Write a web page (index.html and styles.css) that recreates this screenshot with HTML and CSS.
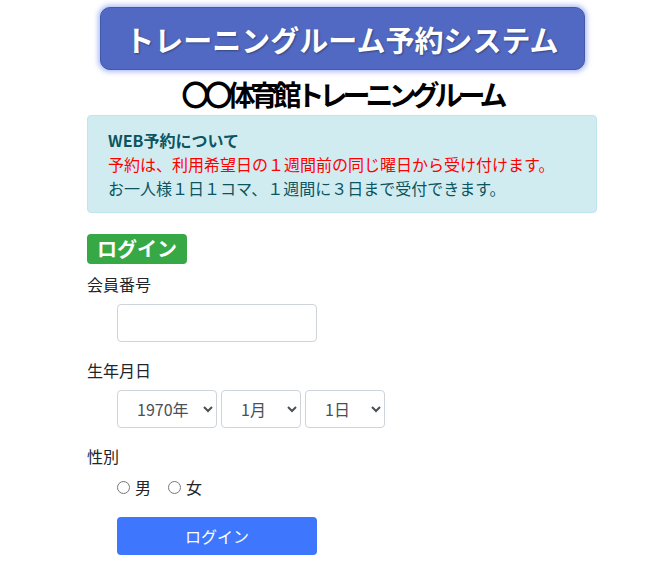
FILE: index.html
```html
<!DOCTYPE html>
<html lang="ja">
<head>
  <meta charset="UTF-8" />
  <title>トレーニングルーム予約システム</title>
  <meta name="viewport" content="width=device-width, initial-scale=1.0" />
  <link rel="stylesheet" href="styles.css">
</head>
<body>
  <div class="container">
    <header class="title-area">
      <div class="banner"><span class="banner-text">トレーニングルーム予約システム</span></div>
      <h1 class="facility">〇〇体育館トレーニングルーム</h1>
    </header>

    <div class="notice">
      <strong>WEB予約について</strong><br />
      <span class="notice-red">予約は、利用希望日の１週間前の同じ曜日から受け付けます。</span><br />
      お一人様１日１コマ、１週間に３日まで受付できます。
    </div>

    <form class="login-form">
      <span class="badge">ログイン</span>

      <div class="form-group">
        <label for="member">会員番号</label>
        <input type="text" id="member" class="field" />
      </div>

      <div class="form-group">
        <label>生年月日</label>
        <div class="birth-row">
          <select class="field year"><option>1970年</option></select>
          <select class="field month"><option>1月</option></select>
          <select class="field day"><option>1日</option></select>
        </div>
      </div>

      <div class="form-group">
        <label>性別</label>
        <div class="gender-row">
          <label class="radio"><input type="radio" name="sex" />男</label>
          <label class="radio"><input type="radio" name="sex" />女</label>
        </div>
      </div>

      <button type="submit">ログイン</button>
    </form>
  </div>
</body>
</html>
```

FILE: styles.css
```css
body {
  margin: 0;
  font-family: "Noto Sans CJK JP", "Noto Sans", sans-serif;
  font-size: 16px;
  line-height: 1.5;
  color: #212529;
  background: #fff;
}
.container {
  width: 510px;
  margin-left: 87px;
}
.banner {
  width: 485px;
  height: 63px;
  box-sizing: border-box;
  margin: 7px auto 0;
  display: flex;
  justify-content: center;
  align-items: center;
  background: #5169c3;
  border: 1px solid #4258a8;
  border-radius: 10px;
  box-shadow: 0 0 5px 2px rgba(110, 135, 235, 0.55);
}
.banner-text {
  white-space: nowrap;
  color: #fff;
  font-size: 29px;
  line-height: 40px;
  font-weight: bold;
  text-shadow: 1px 1px 2px rgba(0, 0, 0, 0.35);
}
.facility {
  margin: 7px 0 4px;
  text-align: center;
  font-size: 28px;
  line-height: 34px;
  font-weight: bold;
  color: #000;
  letter-spacing: -5px;
}
.notice {
  background: #d1ecf1;
  border: 1px solid #bee5eb;
  border-radius: 4px;
  color: #0c5460;
  padding: 12px 20px;
  margin-bottom: 21px;
}
.notice-red {
  color: #ff0000;
}
.badge {
  display: block;
  width: fit-content;
  background: #37a846;
  color: #fff;
  font-size: 20px;
  font-weight: bold;
  line-height: 30px;
  padding: 0 10px;
  border-radius: 4px;
  margin-bottom: 8px;
}
.form-group {
  margin-bottom: 16px;
}
.form-group > label {
  display: block;
  margin-bottom: 8px;
}
.field {
  box-sizing: border-box;
  height: 38px;
  border: 1px solid #ced4da;
  border-radius: 4px;
  background-color: #fff;
  color: #495057;
  font-family: inherit;
  font-size: 16px;
}
input.field {
  display: block;
  width: 200px;
  margin-left: 30px;
  padding: 6px 12px;
}
.birth-row {
  display: flex;
  gap: 4px;
  margin-left: 30px;
}
.birth-row select {
  padding: 0 4px 0 15px;
}
.year {
  width: 100px;
}
.month,
.day {
  width: 80px;
}
.gender-row {
  display: flex;
  gap: 17px;
  margin-left: 30px;
  height: 22px;
  align-items: center;
}
.radio {
  display: flex;
  align-items: center;
}
.radio input {
  margin: 0 5px 0 0;
  width: 13px;
  height: 13px;
}
button {
  display: block;
  width: 200px;
  height: 38px;
  margin-top: 19px;
  margin-left: 30px;
  background-color: #3e77fe;
  color: #fff;
  border: none;
  border-radius: 4px;
  font-family: inherit;
  font-size: 16px;
  cursor: pointer;
}
.form-group:last-of-type {
  margin-bottom: 0;
}
```
